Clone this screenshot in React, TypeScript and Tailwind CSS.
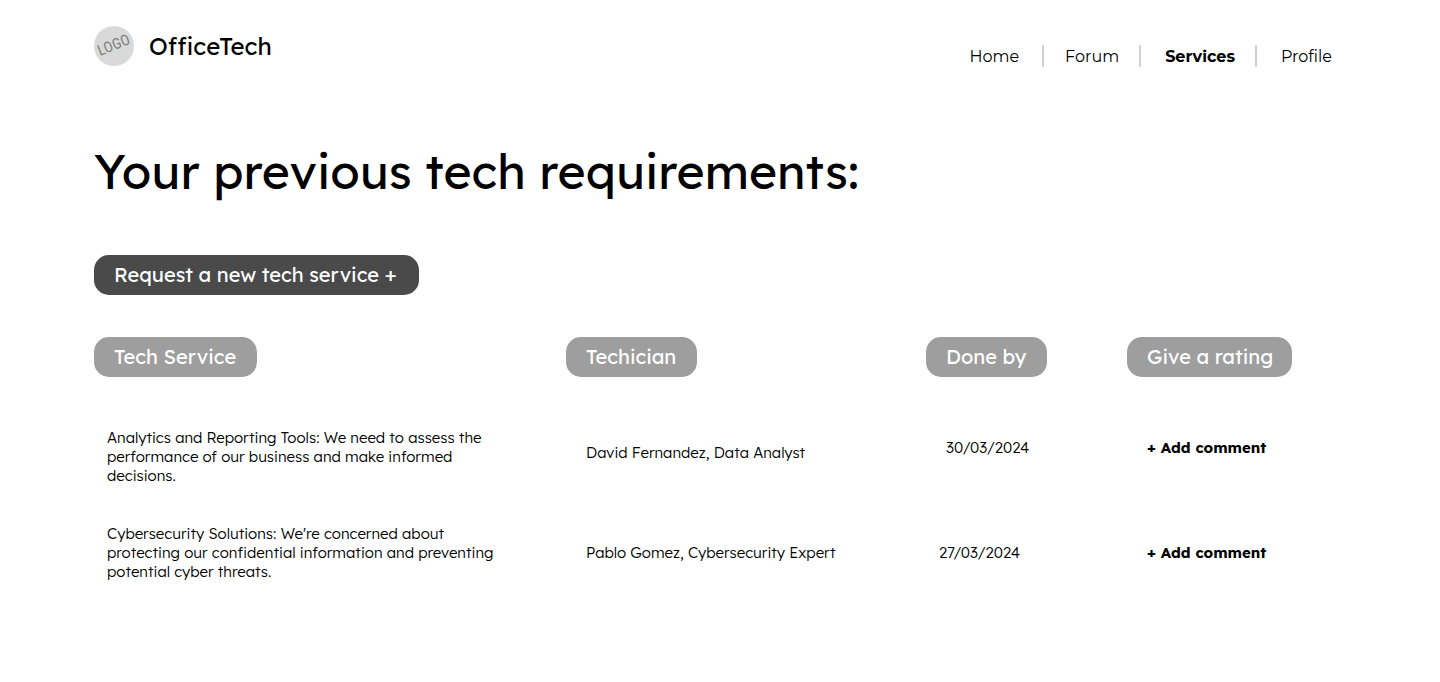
const navItems = [
  { label: "Home", divider: "" },
  { label: "Forum", divider: "mr-[21px] ml-[23px]" },
  { label: "Services", divider: "mr-6 ml-5" },
  { label: "Profile", divider: "mr-6 ml-5" },
];

const rows = [
  {
    service: "Analytics and Reporting Tools: We need to assess the performance of our business and make informed decisions.",
    technician: "David Fernandez, Data Analyst",
    date: "30/03/2024",
    dateClass: "pt-2.5 pl-5",
    techClass: "pt-[15px]",
    commentClass: "pt-2.5",
  },
  {
    service: "Cybersecurity Solutions: We're concerned about protecting our confidential information and preventing potential cyber threats.",
    technician: "Pablo Gomez, Cybersecurity Expert",
    date: "27/03/2024",
    dateClass: "pt-[19px] pl-[13px]",
    techClass: "pt-[19px]",
    commentClass: "pt-[19px]",
  },
];

const headings = [
  { label: "Tech Service", width: "w-[163px]" },
  { label: "Techician", width: "w-[131px]" },
  { label: "Done by", width: "w-[121px]" },
  { label: "Give a rating", width: "w-[165px]" },
];

function Logo() {
  return (
    <svg viewBox="0 0 40 40" className="size-10" role="img" aria-label="Logo">
      <circle cx="20" cy="20" r="20" fill="#d9d9d9" />
      <text x="20" y="24" textAnchor="middle" transform="rotate(-22 20 20)" fontSize="15" fill="#808080" className="font-['Roboto_Condensed','Roboto',sans-serif]">
        LOGO
      </text>
    </svg>
  );
}

export default function App() {
  return (
    <div className="min-h-screen bg-white pr-[108px] pl-[94px] font-['Lexend','Lato',sans-serif] text-black">
      <header className="flex h-[90px] items-start justify-between pt-[26px]">
        <a href="#" className="flex items-center gap-[15px] text-2xl">
          <Logo />
          OfficeTech
        </a>
        <nav className="flex items-start pt-[18px] font-['Montserrat','Open_Sans',sans-serif] text-base leading-[26px]">
          {navItems.map((item) => (
            <div key={item.label} className="flex items-start">
              {item.divider && <span className={`mt-px h-[22px] w-0.5 bg-[#d0d0d0] ${item.divider}`} />}
              <a href="#" className={item.label === "Services" ? "font-bold" : ""}>{item.label}</a>
            </div>
          ))}
        </nav>
      </header>
      <main>
        <h1 className="pt-[51px] text-5xl leading-[60px]">Your previous tech requirements:</h1>
        <button className="mt-[54px] block h-10 w-[325px] rounded-[15px] bg-[#4a4a4a] px-5 text-left text-xl whitespace-nowrap text-white">
          Request a new tech service +
        </button>
        <table className="mt-[42px] w-full table-fixed border-collapse text-left">
          <colgroup>
            <col className="w-[38.13%]" />
            <col className="w-[29.08%]" />
            <col className="w-[16.24%]" />
            <col />
          </colgroup>
          <thead>
            <tr>
              {headings.map((h) => (
                <th key={h.label} className="p-0 pb-[51px] font-normal">
                  <span className={`flex h-10 items-center rounded-[15px] bg-[#9e9e9e] px-5 text-xl whitespace-nowrap text-white ${h.width}`}>{h.label}</span>
                </th>
              ))}
            </tr>
          </thead>
          <tbody className="text-[15px] leading-[19px] font-light">
            {rows.map((r) => (
              <tr key={r.date} className="align-top">
                <td className="p-0 pr-16 pb-[39px] pl-[13px]">{r.service}</td>
                <td className={`pl-5 ${r.techClass}`}>{r.technician}</td>
                <td className={r.dateClass}>{r.date}</td>
                <td className={`pl-5 ${r.commentClass}`}>
                  <button className="font-bold whitespace-nowrap">+ Add comment</button>
                </td>
              </tr>
            ))}
          </tbody>
        </table>
      </main>
    </div>
  );
}
